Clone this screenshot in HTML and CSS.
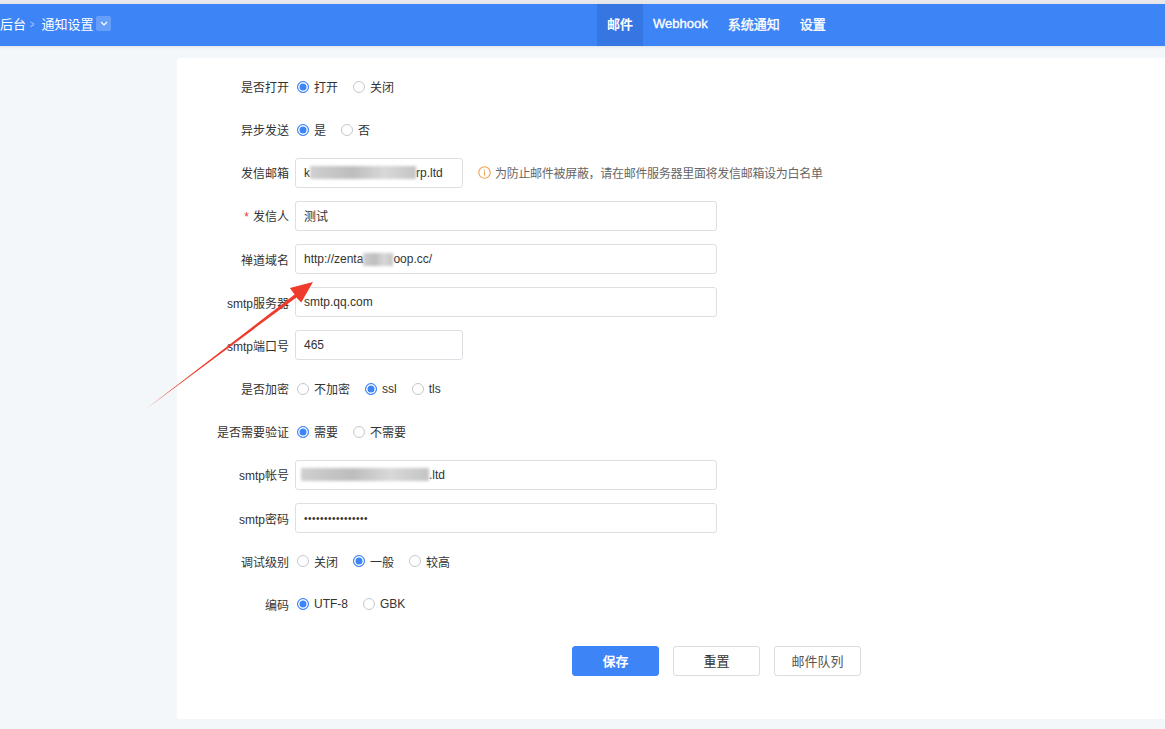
FILE: index.html
```html
<!DOCTYPE html>
<html lang="zh-CN">
<head>
  <meta charset="UTF-8" />
  <meta name="viewport" content="width=device-width, initial-scale=1.0"/>
  <title>通知设置 - 邮件</title>
  <link rel="stylesheet" href="styles.css">
</head>
<body>
  <div class="topline"></div>
  <header class="navbar">
    <div class="crumbs">
      <span>后台</span>
      <span class="sep">&gt;</span>
      <span>通知设置</span>
      <span class="drop">
        <svg width="8" height="5" viewBox="0 0 8 5"><path d="M1 1l3 3 3-3" fill="none" stroke="#fff" stroke-width="1.2"/></svg>
      </span>
    </div>
    <nav class="tabs">
      <a class="active">邮件</a>
      <a>Webhook</a>
      <a>系统通知</a>
      <a>设置</a>
    </nav>
  </header>

  <main class="main">
    <section class="panel">
      <form class="form">
        <div class="row">
          <label class="lbl">是否打开</label>
          <div class="ctl">
            <span class="opt"><i class="radio on"></i>打开</span>
            <span class="opt"><i class="radio"></i>关闭</span>
          </div>
        </div>
        <div class="row">
          <label class="lbl">异步发送</label>
          <div class="ctl">
            <span class="opt"><i class="radio on"></i>是</span>
            <span class="opt"><i class="radio"></i>否</span>
          </div>
        </div>
        <div class="row">
          <label class="lbl">发信邮箱</label>
          <div class="ctl">
            <div class="input short">k<span class="blur" style="width:106px"></span>rp.ltd</div>
            <span class="tip">
              <svg width="13" height="13" viewBox="0 0 13 13"><circle cx="6.5" cy="6.5" r="5.7" fill="none" stroke="#f0a254" stroke-width="1.1"/><rect x="5.95" y="5.5" width="1.1" height="4" fill="#f0a254"/><circle cx="6.5" cy="3.9" r="0.7" fill="#f0a254"/></svg>
              为防止邮件被屏蔽，请在邮件服务器里面将发信邮箱设为白名单
            </span>
          </div>
        </div>
        <div class="row">
          <label class="lbl"><em>*</em>发信人</label>
          <div class="ctl"><div class="input">测试</div></div>
        </div>
        <div class="row">
          <label class="lbl">禅道域名</label>
          <div class="ctl"><div class="input">http://zenta<span class="blur" style="width:30px"></span>oop.cc/</div></div>
        </div>
        <div class="row">
          <label class="lbl">smtp服务器</label>
          <div class="ctl"><div class="input">smtp.qq.com</div></div>
        </div>
        <div class="row">
          <label class="lbl">smtp端口号</label>
          <div class="ctl"><div class="input short">465</div></div>
        </div>
        <div class="row">
          <label class="lbl">是否加密</label>
          <div class="ctl">
            <span class="opt"><i class="radio"></i>不加密</span>
            <span class="opt"><i class="radio on"></i>ssl</span>
            <span class="opt"><i class="radio"></i>tls</span>
          </div>
        </div>
        <div class="row">
          <label class="lbl">是否需要验证</label>
          <div class="ctl">
            <span class="opt"><i class="radio on"></i>需要</span>
            <span class="opt"><i class="radio"></i>不需要</span>
          </div>
        </div>
        <div class="row">
          <label class="lbl">smtp帐号</label>
          <div class="ctl"><div class="input pad-s"><span class="blur" style="width:128px"></span>.ltd</div></div>
        </div>
        <div class="row">
          <label class="lbl">smtp密码</label>
          <div class="ctl"><div class="input dots">••••••••••••••••</div></div>
        </div>
        <div class="row">
          <label class="lbl">调试级别</label>
          <div class="ctl">
            <span class="opt"><i class="radio"></i>关闭</span>
            <span class="opt"><i class="radio on"></i>一般</span>
            <span class="opt"><i class="radio"></i>较高</span>
          </div>
        </div>
        <div class="row">
          <label class="lbl">编码</label>
          <div class="ctl">
            <span class="opt"><i class="radio on"></i>UTF-8</span>
            <span class="opt"><i class="radio"></i>GBK</span>
          </div>
        </div>

        <div class="actions">
          <button type="button" class="btn primary">保存</button>
          <button type="button" class="btn">重置</button>
          <button type="button" class="btn muted">邮件队列</button>
        </div>
      </form>
    </section>
  </main>

  <!-- annotation arrow drawn on the screenshot -->
  <svg class="arrow" width="1165" height="729" viewBox="0 0 1165 729">
    <polygon points="146,409 296.4,297.4 301.2,302.6 313,282 289.9,287.9 294.6,294.6" fill="#ee3b2c"/>
  </svg>
</body>
</html>
```

FILE: styles.css
```css
body {
  margin: 0;
  font-family: "Liberation Sans", "Noto Sans CJK SC", sans-serif;
  font-size: 12px;
  color: #333;
  background: #f4f7f9;
  height: 729px;
  overflow: hidden;
}
.topline {
  height: 4px;
  background: #e6e8eb;
}
.navbar {
  height: 42px;
  box-sizing: border-box;
  padding-bottom: 3px;
  background: #3d84f7;
  color: #fff;
  display: flex;
  align-items: stretch;
  box-shadow: 0 1px 3px rgba(0, 0, 0, 0.08);
}
.crumbs {
  display: flex;
  align-items: center;
  font-size: 13px;
  width: 597px;
}
.crumbs .sep {
  color: #b8d2fb;
  font-size: 11px;
  margin: 0 6px 0 3px;
  transform: scaleX(0.7);
}
.crumbs .drop {
  width: 15px;
  height: 15px;
  margin-left: 3px;
  background: rgba(255, 255, 255, 0.22);
  border-radius: 2px;
  display: flex;
  align-items: center;
  justify-content: center;
}
.tabs {
  display: flex;
  margin-bottom: -3px;
}
.tabs a {
  display: flex;
  align-items: center;
  padding: 0 10px 3px;
  font-size: 13px;
  color: #fff;
  -webkit-text-stroke: 0.35px #fff;
}
.tabs a.active {
  background: #3676e2;
  font-weight: bold;
  -webkit-text-stroke: 0;
}
.main {
  padding: 12px 0 0 177px;
}
.panel {
  background: #fff;
  border-radius: 4px 0 0 4px;
  height: 661px;
}
.form {
  padding-top: 13.5px;
}
.row {
  display: flex;
  align-items: center;
  height: 30px;
  margin-bottom: 13.17px;
}
.lbl {
  width: 112px;
  text-align: right;
  padding-right: 6px;
  white-space: nowrap;
}
.lbl em {
  color: #e4393c;
  font-style: normal;
  margin-right: 4px;
}
.ctl {
  display: flex;
  align-items: center;
}
.opt {
  display: inline-flex;
  align-items: center;
  margin-right: 13px;
}
.radio {
  width: 10px;
  height: 10px;
  border: 1px solid #c4c8ce;
  border-radius: 50%;
  margin: 0 5px 0 2px;
  box-sizing: content-box;
  background: #fff;
}
.radio.on {
  border-color: #3d84f7;
  background: #3d84f7;
  box-shadow: inset 0 0 0 1.5px #fff;
}
.input {
  width: 422px;
  height: 30px;
  box-sizing: border-box;
  border: 1px solid #dcdfe3;
  border-radius: 3px;
  padding: 0 8px;
  display: flex;
  align-items: center;
  white-space: nowrap;
}
.input.short {
  width: 168px;
}
.input.pad-s {
  padding-left: 5px;
}
.input.dots {
  font-size: 10px;
  letter-spacing: 0.5px;
}
.blur {
  display: inline-block;
  height: 13px;
  background: linear-gradient(90deg, #cfcfcf, #bdbdbd 40%, #d8d8d8 70%, #c4c4c4);
  filter: blur(1.5px);
}
.tip {
  display: inline-flex;
  align-items: center;
  gap: 4px;
  margin-left: 15px;
  color: #666;
  letter-spacing: -0.3px;
}
.actions {
  display: flex;
  gap: 14px;
  padding-left: 395px;
  margin-top: 26.5px;
}
.btn {
  width: 87px;
  height: 30px;
  border: 1px solid #d9dce0;
  border-radius: 3px;
  background: #fff;
  font-family: inherit;
  font-size: 13px;
  color: #333;
}
.btn.primary {
  background: #3d84f7;
  border-color: #3d84f7;
  color: #fff;
  font-weight: bold;
}
.btn.muted {
  color: #555;
}
.arrow {
  position: absolute;
  left: 0;
  top: 0;
  pointer-events: none;
}
```
